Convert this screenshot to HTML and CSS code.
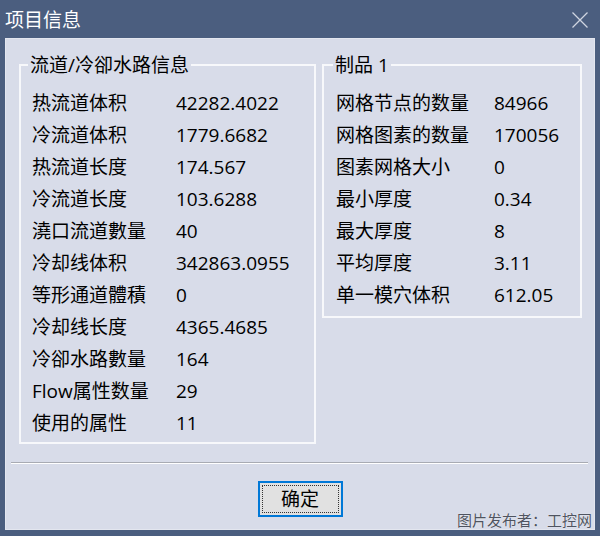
FILE: index.html
```html
<!DOCTYPE html>
<html lang="zh-CN">
<head>
<meta charset="utf-8">
<title>项目信息</title>
<link rel="stylesheet" href="styles.css">
</head>
<body>
<div class="window">
  <div class="titlebar">
    <span class="title">项目信息</span>
    <svg class="close" width="18" height="18" viewBox="0 0 18 18"><path d="M1.5 1.5 L16.5 16.5 M16.5 1.5 L1.5 16.5" stroke="#cfd5e1" stroke-width="1.3" fill="none"/></svg>
  </div>
  <div class="client">
    <div class="groups">
      <fieldset class="group group-left">
        <legend>流道/冷卻水路信息</legend>
        <div class="rows rows-left">
          <span>热流道体积</span><span>42282.4022</span>
          <span>冷流道体积</span><span>1779.6682</span>
          <span>热流道长度</span><span>174.567</span>
          <span>冷流道长度</span><span>103.6288</span>
          <span>澆口流道數量</span><span>40</span>
          <span>冷却线体积</span><span>342863.0955</span>
          <span>等形通道體積</span><span>0</span>
          <span>冷却线长度</span><span>4365.4685</span>
          <span>冷卻水路數量</span><span>164</span>
          <span>Flow属性数量</span><span>29</span>
          <span>使用的属性</span><span>11</span>
        </div>
      </fieldset>
      <fieldset class="group group-right">
        <legend>制品 1</legend>
        <div class="rows rows-right">
          <span>网格节点的数量</span><span>84966</span>
          <span>网格图素的数量</span><span>170056</span>
          <span>图素网格大小</span><span>0</span>
          <span>最小厚度</span><span>0.34</span>
          <span>最大厚度</span><span>8</span>
          <span>平均厚度</span><span>3.11</span>
          <span>单一模穴体积</span><span>612.05</span>
        </div>
      </fieldset>
    </div>
    <div class="sep"></div>
    <div class="actions">
      <button class="btn"><span class="focus">确定</span></button>
    </div>
    <div class="watermark">图片发布者：工控网</div>
  </div>
</div>
</body>
</html>
```

FILE: styles.css
```css
html, body {
  margin: 0;
  padding: 0;
}
body {
  width: 600px;
  height: 536px;
  overflow: hidden;
  background: #4b5e7f;
  font-family: "Open Sans", "Noto Sans CJK SC", sans-serif;
  font-weight: 400;
  color: #000;
}
.window {
  display: flex;
  flex-direction: column;
  height: 536px;
}
.titlebar {
  height: 38px;
  display: flex;
  align-items: center;
  justify-content: space-between;
  padding: 0 11px 0 5px;
  box-sizing: border-box;
}
.title {
  color: #fff;
  font-size: 19px;
  line-height: 24px;
  margin-top: 2px;
}
.close {
  display: block;
  margin-top: 2px;
}
.client {
  flex: 1;
  margin: 0 5px 6px 5px;
  background: #d8dce9;
  position: relative;
  box-shadow: inset 1px 1px 0 #e3e6ef, inset -1px -1px 0 #e3e6ef;
  font-size: 19px;
}
.groups {
  display: flex;
  align-items: flex-start;
  gap: 6px;
  padding: 16px 0 0 14px;
}
.group {
  margin: 0;
  padding: 0;
  border: 2px solid #f7f8fb;
  box-sizing: border-box;
  min-width: 0;
}
.group legend {
  font-size: 19px;
  line-height: 22px;
  padding: 0 2px;
}
.group-left {
  width: 297px;
}
.group-left legend {
  margin-left: 7px;
}
.group-right {
  width: 260px;
}
.group-right legend {
  margin-left: 9px;
}
.rows {
  display: grid;
  grid-auto-rows: 32px;
  align-items: center;
  white-space: nowrap;
  line-height: 24px;
}
.rows-left {
  grid-template-columns: 144px auto;
  padding: 11px 0 3px 11px;
}
.rows-right {
  grid-template-columns: 158px auto;
  padding: 11px 0 5px 12px;
}
.sep {
  margin: 18px 7px 0 6px;
  height: 1px;
  background: #a8abb3;
  border-bottom: 1px solid #ffffff;
}
.actions {
  display: flex;
  justify-content: center;
  margin-top: 17px;
}
.btn {
  width: 85px;
  height: 36px;
  padding: 2px;
  box-sizing: border-box;
  border: 2px solid #0078d7;
  background: #e1e1e1;
  font-family: "Open Sans", "Noto Sans CJK SC", sans-serif;
  font-weight: 400;
  font-size: 19px;
  color: #000;
  display: flex;
}
.focus {
  flex: 1;
  border: 1px dotted #333;
  display: flex;
  align-items: center;
  justify-content: center;
  line-height: 22px;
}
.watermark {
  position: absolute;
  right: 3px;
  bottom: 0;
  font-size: 15px;
  line-height: 20px;
  color: #4f5460;
  font-weight: 400;
  text-shadow: 0 0 1px #fff;
}
```
